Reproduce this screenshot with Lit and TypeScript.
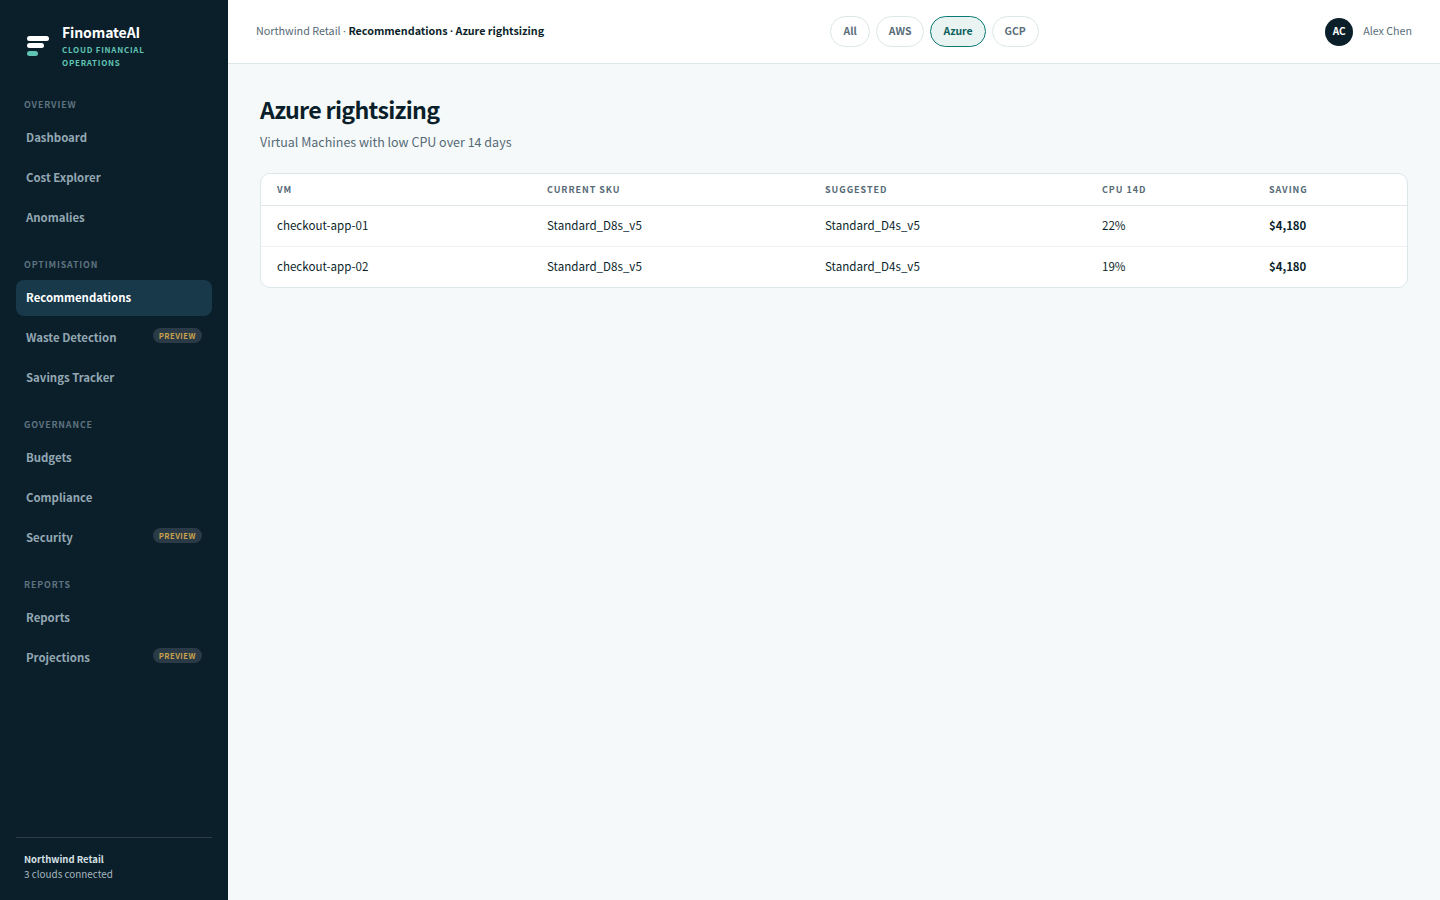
import { LitElement, html, css, nothing } from "lit";
import { customElement } from "lit/decorators.js";

type NavItem = { label: string; active?: boolean; preview?: boolean };
type NavGroup = { title: string; items: NavItem[] };

const groups: NavGroup[] = [
	{ title: "Overview", items: [{ label: "Dashboard" }, { label: "Cost Explorer" }, { label: "Anomalies" }] },
	{ title: "Optimisation", items: [{ label: "Recommendations", active: true }, { label: "Waste Detection", preview: true }, { label: "Savings Tracker" }] },
	{ title: "Governance", items: [{ label: "Budgets" }, { label: "Compliance" }, { label: "Security", preview: true }] },
	{ title: "Reports", items: [{ label: "Reports" }, { label: "Projections", preview: true }] },
];

const clouds = ["All", "AWS", "Azure", "GCP"];

const rows = [
	{ vm: "checkout-app-01", sku: "Standard_D8s_v5", suggested: "Standard_D4s_v5", cpu: "22%", saving: "$4,180" },
	{ vm: "checkout-app-02", sku: "Standard_D8s_v5", suggested: "Standard_D4s_v5", cpu: "19%", saving: "$4,180" },
];

@customElement("app-root")
export class AppRoot extends LitElement
{
	static styles = css`
		:host {
			display: flex;
			min-height: 900px;
			font-family: "Noto Sans CJK SC", "Noto Sans", sans-serif;
			background: #f5f9fa;
			color: #0b1f2a;
		}

		.sidebar {
			width: 228px;
			flex: none;
			box-sizing: border-box;
			height: 900px;
			background: #0b1f2a;
			padding: 20px 16px 18px;
			display: flex;
			flex-direction: column;
		}

		.brand {
			display: flex;
			align-items: center;
			gap: 12px;
			padding: 0 10px;
			height: 50px;
			margin-bottom: 27.5px;
		}

		.brand-name {
			color: #fff;
			font-size: 14px;
			font-weight: 700;
			line-height: 24px;
			letter-spacing: -0.1px;
		}

		.brand-sub {
			color: #5fc4b4;
			font-size: 8px;
			font-weight: 700;
			line-height: 13px;
			letter-spacing: 0.75px;
			text-transform: uppercase;
			margin: -1px 0 1px;
		}

		.group { margin-bottom: 18px; }

		.group-title {
			color: #5e7380;
			font-size: 8.9px;
			font-weight: 700;
			line-height: 14px;
			letter-spacing: 0.85px;
			text-transform: uppercase;
			padding: 0 8px;
			margin-bottom: 8px;
		}

		.nav-item {
			display: flex;
			align-items: center;
			justify-content: space-between;
			box-sizing: border-box;
			height: 36px;
			margin-bottom: 4px;
			padding: 0 10px 2px;
			border-radius: 8px;
			color: #93a7b3;
			font-size: 11.4px;
			font-weight: 600;
		}

		.nav-item.active {
			background: #17394a;
			color: #fff;
			font-weight: 700;
		}

		.badge {
			background: #2a3b47;
			color: #c9a24d;
			font-size: 7.6px;
			font-weight: 700;
			line-height: 15px;
			letter-spacing: 0.5px;
			padding: 0 6px;
			border-radius: 8px;
			margin-top: -3px;
		}

		.footer {
			margin-top: auto;
			border-top: 1px solid #2a3d49;
			padding: 14px 8px 0;
			font-size: 9.9px;
			line-height: 15px;
			color: #a5b6bf;
		}

		.footer strong {
			display: block;
			color: #d5e0e5;
			font-size: 9.5px;
			font-weight: 700;
		}

		.main {
			flex: 1;
			min-width: 0;
			display: flex;
			flex-direction: column;
		}

		.topbar {
			height: 64px;
			box-sizing: border-box;
			background: #fff;
			border-bottom: 1px solid #dde7e9;
			display: flex;
			justify-content: space-between;
			align-items: center;
			padding: 0 28px;
		}

		.crumbs {
			font-size: 10.75px;
			color: #566a76;
			padding-bottom: 3px;
		}

		.crumbs strong {
			color: #0b1f2a;
			font-weight: 700;
		}

		.sep { font-family: "Noto Sans", sans-serif; }

		.pills {
			display: flex;
			gap: 6px;
		}

		.pill {
			height: 31px;
			box-sizing: border-box;
			display: flex;
			align-items: center;
			padding: 0 12px 2px;
			border: 1px solid #dde7e9;
			border-radius: 16px;
			background: #fff;
			color: #5a6e7a;
			font-size: 10.45px;
			font-weight: 700;
		}

		.pill.active {
			border-color: #0b7a75;
			background: #e9f3f1;
			color: #0b5f5c;
		}

		.user {
			display: flex;
			align-items: center;
			justify-content: flex-end;
			gap: 10px;
			font-size: 10.7px;
			color: #5a6e7a;
		}

		.user span { padding-bottom: 2px; }

		.avatar {
			width: 28px;
			height: 28px;
			box-sizing: border-box;
			padding-bottom: 2px;
			border-radius: 50%;
			background: #0b1f2a;
			color: #fff;
			font-size: 10px;
			font-weight: 700;
			display: flex;
			align-items: center;
			justify-content: center;
		}

		.content { padding: 27px 32px; }

		h1 {
			margin: 0;
			font-size: 23.2px;
			line-height: 36px;
			font-weight: 700;
			letter-spacing: -0.7px;
		}

		.subtitle {
			margin: 5px 0 21px;
			font-size: 12.5px;
			line-height: 20px;
			color: #566a76;
		}

		.table {
			background: #fff;
			border: 1px solid #dde7e9;
			border-radius: 10px;
			overflow: hidden;
		}

		.row {
			display: grid;
			grid-template-columns: 270px 278px 277px 167px 1fr;
			align-items: center;
			box-sizing: border-box;
			height: 41px;
			font-size: 11.6px;
			border-top: 1px solid #edf2f3;
		}

		.row.head {
			height: 32px;
			border-top: none;
			border-bottom: 1px solid #dde7e9;
			font-size: 9px;
			font-weight: 700;
			letter-spacing: 0.95px;
			text-transform: uppercase;
			color: #566a76;
		}

		.row.head + .row { border-top: none; height: 40px; }

		.row > div { padding: 0 16px 2px; }

		.row.head > div { padding-bottom: 0; }

		.row > .saving { font-size: 11.4px; font-weight: 600; }
	`

	render()
	{
		return html`
			<aside class="sidebar">
				<div class="brand">
					<svg width="24" height="24" viewBox="0 0 24 24">
						<rect x="1" y="3" width="22" height="5" rx="2.5" fill="#fff"></rect>
						<rect x="1" y="10" width="17" height="5" rx="2.5" fill="#fff"></rect>
						<rect x="1" y="18" width="11" height="5" rx="2.5" fill="#5fc4b4"></rect>
					</svg>
					<div>
						<div class="brand-name">FinomateAI</div>
						<div class="brand-sub">Cloud Financial<br>Operations</div>
					</div>
				</div>
				${groups.map((g) => html`
					<div class="group">
						<div class="group-title">${g.title}</div>
						${g.items.map((i) => html`
							<div class="nav-item ${i.active ? "active" : ""}">
								<span>${i.label}</span>
								${i.preview ? html`<span class="badge">PREVIEW</span>` : nothing}
							</div>
						`)}
					</div>
				`)}
				<div class="footer">
					<strong>Northwind Retail</strong>
					3 clouds connected
				</div>
			</aside>
			<div class="main">
				<header class="topbar">
					<div class="crumbs">Northwind Retail <span class="sep">·</span> <strong>Recommendations <span class="sep">·</span> Azure rightsizing</strong></div>
					<div class="pills">
						${clouds.map((c) => html`<div class="pill ${c === "Azure" ? "active" : ""}">${c}</div>`)}
					</div>
					<div class="user">
						<div class="avatar">AC</div>
						<span>Alex Chen</span>
					</div>
				</header>
				<main class="content">
					<h1>Azure rightsizing</h1>
					<p class="subtitle">Virtual Machines with low CPU over 14 days</p>
					<div class="table">
						<div class="row head">
							<div>VM</div><div>Current SKU</div><div>Suggested</div><div>CPU 14d</div><div>Saving</div>
						</div>
						${rows.map((r) => html`
							<div class="row">
								<div>${r.vm}</div>
								<div>${r.sku}</div>
								<div>${r.suggested}</div>
								<div>${r.cpu}</div>
								<div class="saving">${r.saving}</div>
							</div>
						`)}
					</div>
				</main>
			</div>
		`
	}
}
